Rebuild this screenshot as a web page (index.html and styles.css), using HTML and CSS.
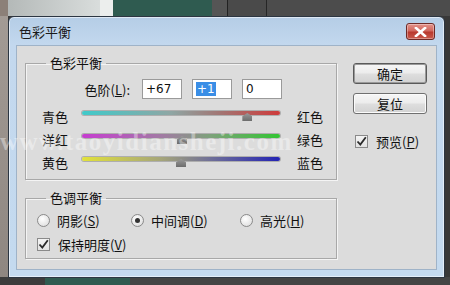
FILE: index.html
```html
<!DOCTYPE html>
<html lang="zh-CN">
<head>
<meta charset="utf-8">
<title>色彩平衡</title>
<link rel="stylesheet" href="styles.css">
</head>
<body>
<div class="win">
  <div class="titlebar">
    <span class="title">色彩平衡</span>
    <span class="close"><svg width="13" height="10" viewBox="0 0 13 10"><path d="M2 1 L11 9 M11 1 L2 9" stroke="#fff" stroke-width="2.6" stroke-linecap="square"/></svg></span>
  </div>
  <div class="client">
    <div class="left">
      <fieldset class="group g1">
        <legend>色彩平衡</legend>
        <div class="levels">
          <span class="lvl-label">色阶(<u>L</u>):</span>
          <span class="box">+67</span>
          <span class="box"><span class="sel">+1</span></span>
          <span class="box">0</span>
        </div>
        <div class="sliders">
          <span class="sl-l">青色</span>
          <div class="track t-cr"><span class="thumb" style="left:83.5%"></span></div>
          <span class="sl-r">红色</span>
          <span class="sl-l">洋红</span>
          <div class="track t-mg"><span class="thumb" style="left:50.5%"></span></div>
          <span class="sl-r">绿色</span>
          <span class="sl-l">黄色</span>
          <div class="track t-yb"><span class="thumb" style="left:50%"></span></div>
          <span class="sl-r">蓝色</span>
        </div>
      </fieldset>
      <fieldset class="group g2">
        <legend>色调平衡</legend>
        <div class="radios">
          <span class="opt o1"><span class="radio"></span>阴影(<u>S</u>)</span>
          <span class="opt o2"><span class="radio on"></span>中间调(<u>D</u>)</span>
          <span class="opt"><span class="radio"></span>高光(<u>H</u>)</span>
        </div>
        <div class="opt keep"><span class="check"><svg width="11" height="11" viewBox="0 0 11 11"><path d="M1.5 5.5 L4.3 8.6 L9.8 1.2" fill="none" stroke="#2a2a2a" stroke-width="1.8"/></svg></span>保持明度(<u>V</u>)</div>
      </fieldset>
    </div>
    <div class="right">
      <span class="btn default">确定</span>
      <span class="btn">复位</span>
      <div class="opt preview"><span class="check"><svg width="11" height="11" viewBox="0 0 11 11"><path d="M1.5 5.5 L4.3 8.6 L9.8 1.2" fill="none" stroke="#2a2a2a" stroke-width="1.8"/></svg></span>预览(<u>P</u>)</div>
    </div>
  </div>
</div>
<div class="watermark">www.taoyidiansheji.com</div>
</body>
</html>
```
FILE: styles.css
```css
html, body {
  margin: 0;
  padding: 0;
}
body {
  width: 450px;
  height: 285px;
  overflow: hidden;
  position: relative;
  font-family: "Noto Sans CJK SC", "Noto Sans", sans-serif;
  font-size: 13px;
  color: #111;
  background:
    linear-gradient(to right, #8c8078 0 8px, #b4b9b8 8px, #d9dddc 100px, #eceeed 100px 113px, #2f5b50 113px 212px, #555 212px 227px, #222 227px 228px, #4a4a4a 228px 266px, #262626 266px 267px, #4c4c4c 267px) top / 100% 16px no-repeat,
    linear-gradient(to right, #3c3c3c 0 45px, #2f5b50 45px 130px, #444 130px) bottom / 100% 8px no-repeat,
    linear-gradient(#a49c96, #8e8680) left / 8px 100% no-repeat,
    #383838;
  padding-top: 16px;
  padding-left: 8px;
  box-sizing: border-box;
}
.win {
  width: 437px;
  height: 262px;
  box-sizing: border-box;
  border: 1px solid #2c3642;
  border-radius: 6px 6px 0 0;
  background: linear-gradient(#b5cde6 0, #c3d8ee 28px, #c4daef 100%);
  padding: 0 7px 7px 7px;
  display: flex;
  flex-direction: column;
  box-shadow: inset 0 0 0 1px rgba(255,255,255,0.55);
}
.titlebar {
  height: 28px;
  display: flex;
  align-items: center;
  justify-content: space-between;
  padding-left: 3px;
  padding-right: 2px;
}
.title {
  font-size: 13px;
  color: #1a1a1a;
  margin-top: 1px;
}
.close {
  width: 29px;
  height: 17px;
  box-sizing: border-box;
  border: 1px solid #6e2a26;
  border-radius: 3px;
  background: linear-gradient(#e3928a 0, #d1685e 45%, #b93a2f 55%, #c95a4c 100%);
  display: flex;
  align-items: center;
  justify-content: center;
  margin-top: 1px;
  box-shadow: inset 0 0 0 1px rgba(255,255,255,0.35);
}
.client {
  flex: 1;
  background: #dcdcdc;
  border: 1px solid #9fb3c8;
  display: flex;
  padding: 9px 0 0 8px;
}
.left {
  width: 312px;
  display: flex;
  flex-direction: column;
}
.group {
  margin: 0;
  border: 1px solid #a8a8a8;
  box-shadow: 1px 1px 0 #f4f4f4, inset 1px 1px 0 #f4f4f4;
  width: 312px;
  box-sizing: border-box;
}
.group legend {
  padding: 0 4px;
  margin-left: 4px;
  font-size: 13px;
  line-height: 16px;
}
.g1 {
  padding: 8px 13px 5px 16px;
}
.levels {
  display: flex;
  align-items: center;
  height: 20px;
  gap: 10px;
}
.lvl-label {
  width: 88px;
  text-align: right;
  margin-right: 2px;
}
.box {
  width: 40px;
  height: 20px;
  box-sizing: border-box;
  background: #fff;
  border: 1px solid #9a9a9a;
  font-family: "DejaVu Sans", sans-serif;
  font-size: 12px;
  line-height: 18px;
  padding-left: 3px;
}
.sel {
  background: #3a8ee6;
  color: #fff;
  padding: 0 1px;
}
.sliders {
  margin-top: 6px;
  display: grid;
  grid-template-columns: 40px 198px 26px;
  grid-auto-rows: 23px;
  column-gap: 17px;
  column-gap: 0;
}
.sl-l {
  line-height: 23px;
}
.sl-r {
  line-height: 23px;
  padding-left: 17px;
  width: 26px;
}
.sliders {
  grid-template-columns: 40px 198px 43px;
}
.track {
  position: relative;
  height: 4px;
  margin-top: 6px;
  border-radius: 2px;
  box-shadow: 0 0 0 1px rgba(90,90,90,0.35);
}
.t-cr { background: linear-gradient(to right, #3fcaca, #8fa6a4 45%, #a27573 70%, #cf3b3b); }
.t-mg { background: linear-gradient(to right, #c63dd0, #a27aa4 40%, #7da27a 65%, #33c533); }
.t-yb { background: linear-gradient(to right, #e2e23a, #a5a57a 40%, #6f6f98 65%, #2323b4); }
.thumb {
  position: absolute;
  top: 2px;
  width: 10px;
  height: 8px;
  margin-left: -5px;
  background: linear-gradient(#9a9a9a, #6c6c6c);
  clip-path: polygon(50% 0, 100% 40%, 100% 100%, 0 100%, 0 40%);
}
.g2 {
  margin-top: 10px;
  padding: 5px 10px 5px 11px;
}
.g2 legend {
  margin-left: 9px;
}
.radios {
  display: flex;
  height: 18px;
  align-items: center;
}
.opt {
  display: flex;
  align-items: center;
  white-space: nowrap;
}
.o1 { width: 94px; }
.o2 { width: 109px; }
.radio {
  width: 13px;
  height: 13px;
  box-sizing: border-box;
  border-radius: 50%;
  border: 1px solid #8a8a8a;
  background: radial-gradient(circle at 40% 35%, #ffffff, #e4e4e4 70%, #cfcfcf);
  margin-right: 7px;
  position: relative;
}
.radio.on::after {
  content: "";
  position: absolute;
  left: 3px;
  top: 3px;
  width: 5px;
  height: 5px;
  border-radius: 50%;
  background: #333;
}
.check {
  width: 13px;
  height: 13px;
  box-sizing: border-box;
  border: 1px solid #8a8a8a;
  background: linear-gradient(#f4f4f4, #e2e2e2);
  display: flex;
  align-items: center;
  justify-content: center;
  margin-right: 8px;
}
.keep {
  margin-top: 6px;
  height: 18px;
}
.right {
  margin-left: 16px;
  padding-top: 8px;
  display: flex;
  flex-direction: column;
  align-items: flex-start;
}
.btn {
  width: 74px;
  height: 21px;
  box-sizing: border-box;
  border: 1px solid #707070;
  border-radius: 3px;
  background: linear-gradient(#f6f6f6 0, #ececec 48%, #dedede 52%, #d2d2d2 100%);
  text-align: center;
  line-height: 19px;
  box-shadow: inset 0 0 0 1px #fbfbfb;
}
.btn.default {
  border-color: #5a5a5a;
  box-shadow: inset 0 0 0 1px #9a9a9a;
}
.btn + .btn {
  margin-top: 9px;
}
.preview {
  margin-top: 18px;
  margin-left: 2px;
  height: 18px;
}
.watermark {
  position: absolute;
  left: 0;
  top: 128px;
  font-family: "Liberation Serif", serif;
  font-weight: bold;
  font-size: 25px;
  letter-spacing: 1.5px;
  color: rgba(255,255,255,0.38);
  pointer-events: none;
}
```
